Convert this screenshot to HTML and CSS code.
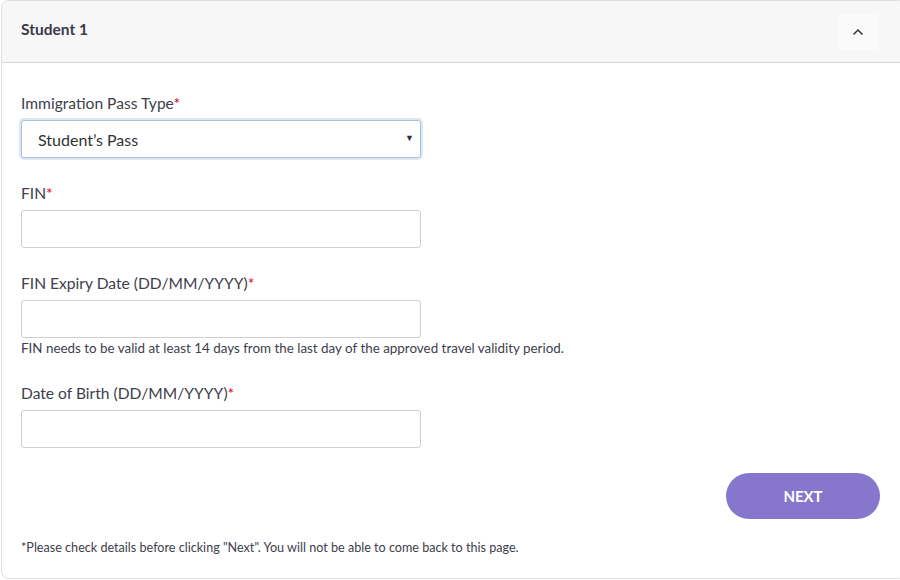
FILE: index.html
```html
<!DOCTYPE html>
<html>
<head>
    <title>Student 1</title>
    <meta name="viewport" content="width=device-width, initial-scale=1.0">
    <link rel="stylesheet" href="styles.css">
</head>
<body>
    <div class="card">
        <div class="card-header">
            <span class="card-title">Student 1</span>
            <button class="toggle-btn" aria-label="Collapse">
                <svg width="12" height="8" viewBox="0 0 12 8"><path d="M1.5 6.5 L6 2 L10.5 6.5" fill="none" stroke="#333" stroke-width="1.5"/></svg>
            </button>
        </div>
        <div class="card-body">
            <div class="field">
                <label>Immigration Pass Type<span class="req">*</span></label>
                <div class="select-wrap">
                    <select class="input select">
                        <option>Student’s Pass</option>
                    </select>
                    <span class="caret">▼</span>
                </div>
            </div>
            <div class="field">
                <label>FIN<span class="req">*</span></label>
                <input class="input" type="text">
            </div>
            <div class="field with-hint">
                <label>FIN Expiry Date (DD/MM/YYYY)<span class="req">*</span></label>
                <input class="input" type="text">
                <div class="hint">FIN needs to be valid at least 14 days from the last day of the approved travel validity period.</div>
            </div>
            <div class="field">
                <label>Date of Birth (DD/MM/YYYY)<span class="req">*</span></label>
                <input class="input" type="text">
            </div>
            <div class="actions">
                <button class="next-btn">NEXT</button>
            </div>
            <p class="note">*Please check details before clicking "Next". You will not be able to come back to this page.</p>
        </div>
    </div>
</body>
</html>
```

FILE: styles.css
```css
body {
    margin: 0;
    background-color: #fff;
    font-family: Lato, "Open Sans", sans-serif;
    color: #40404c;
}
.card {
    margin: 0 -6px 0 1px;
    border: 1px solid #e2dede;
    border-radius: 8px;
    overflow: hidden;
    background-color: #fff;
}
.card-header {
    height: 61px;
    background-color: #f7f7f7;
    border-bottom: 1px solid #d9d9d9;
    display: flex;
    align-items: center;
    justify-content: space-between;
    padding: 0 26px 0 19px;
}
.card-title {
    font-size: 15.5px;
    font-weight: bold;
    color: #3a3a4a;
    margin-top: -5px;
}
.toggle-btn {
    width: 42px;
    height: 36px;
    border: none;
    background-color: #fafafb;
    border-radius: 3px;
    display: flex;
    align-items: center;
    justify-content: center;
    padding: 0;
}
.card-body {
    padding: 30px 0 22px 19px;
}
.field {
    margin-bottom: 25px;
    width: 400px;
}
.field.with-hint {
    margin-bottom: 26px;
}
.field label {
    display: block;
    font-size: 15.6px;
    line-height: 20px;
    margin-bottom: 7px;
    color: #40404c;
}
.req {
    color: #d0021b;
}
.input {
    display: block;
    box-sizing: border-box;
    width: 400px;
    height: 38px;
    border: 1px solid #cfcfcf;
    border-radius: 3px;
    background-color: #fff;
    font-family: Lato, "Open Sans", sans-serif;
    font-size: 16px;
    color: #333;
    padding: 0 16px;
}
.select-wrap {
    position: relative;
}
.select {
    appearance: none;
    -webkit-appearance: none;
    border-color: #a8c3de;
    box-shadow: 0 0 0 2px #dce8f4;
    outline: none;
}
.caret {
    position: absolute;
    right: 7px;
    top: 12px;
    font-size: 9px;
    color: #333;
    pointer-events: none;
}
.hint {
    font-size: 13.4px;
    line-height: 17px;
    margin-top: 2px;
    width: 620px;
    color: #40404c;
}
.actions {
    display: flex;
    justify-content: flex-end;
    margin-right: 25px;
}
.next-btn {
    width: 154px;
    height: 46px;
    border: none;
    border-radius: 23px;
    background-color: #8677cd;
    color: #fff;
    font-family: Lato, "Open Sans", sans-serif;
    font-size: 15px;
    font-weight: bold;
}
.note {
    font-size: 12.6px;
    line-height: 16px;
    margin: 21px 0 0 0;
    color: #40404c;
}
```
